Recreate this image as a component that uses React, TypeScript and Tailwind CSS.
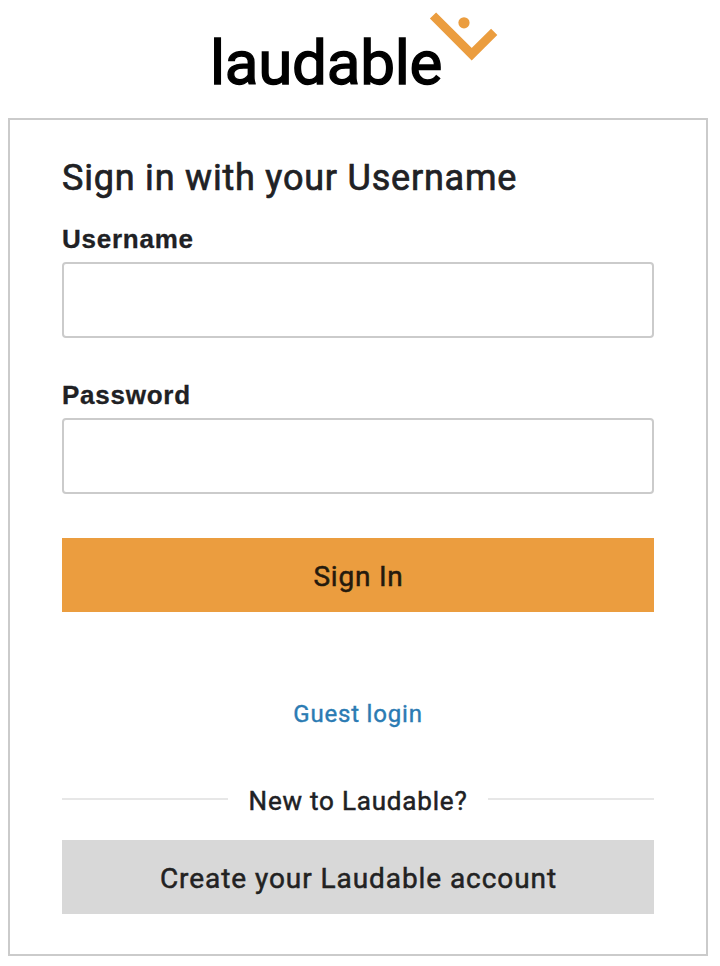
export default function App() {
  return (
    <main className="h-[966px] w-[720px] overflow-hidden bg-white font-['Roboto',sans-serif] text-[#202124]">
      <header className="flex h-[118px] items-start pl-[210px]">
        <span className="mt-[23px] w-[232px] whitespace-nowrap text-[62px] leading-[80px] tracking-[-0.3px] text-black [-webkit-text-stroke:1.4px_black]">laudable</span>
        <svg className="-ml-[13px] mt-[10px] h-[52px] w-[70px] shrink-0" viewBox="429 10 70 52">
          <path d="M433 15.5 471.7 54.2 494.2 31.8" fill="none" stroke="#eb9d3f" strokeWidth="8.8" />
          <circle cx="464" cy="22.8" r="5.6" fill="#eb9d3f" />
        </svg>
      </header>
      <form className="mx-2 h-[838px] w-[700px] border-2 border-[#cbcbcb] px-[52px] pt-[34px]">
        <h1 className="h-[48px] whitespace-nowrap text-[36px] leading-[48px] tracking-[0.79px] [-webkit-text-stroke:0.7px_#202124]">Sign in with your Username</h1>
        <label className="mt-[21px] block h-[39px] font-['Liberation_Sans',sans-serif] text-[26px] font-bold leading-[32px] tracking-[0.75px] [-webkit-text-stroke:0.3px_#202124]">Username</label>
        <input className="block h-[76px] w-full rounded-[4px] border-2 border-[#cbcbcb]" />
        <label className="mt-[41px] block h-[39px] font-['Liberation_Sans',sans-serif] text-[26px] font-bold leading-[32px] tracking-[0.75px] [-webkit-text-stroke:0.3px_#202124]">Password</label>
        <input className="block h-[76px] w-full rounded-[4px] border-2 border-[#cbcbcb]" type="password" />
        <button className="mt-[44px] block h-[74px] w-full bg-[#eb9d3f] pl-px pt-[3px] text-[28px] tracking-[0.8px] text-[#241a0d] [-webkit-text-stroke:0.5px_#241a0d]">Sign In</button>
        <a className="mt-[86px] block text-center text-[24px] leading-[32px] tracking-[0.8px] text-[#2b7bb3] [-webkit-text-stroke:0.4px_#2b7bb3]">Guest login</a>
        <div className="mt-[54px] flex h-[34px] items-center justify-between whitespace-nowrap text-[26px] tracking-[0.8px]">
          <i className="mb-[4px] h-[2px] w-[166px] bg-[#e7e7e7]" />
          <span className="[-webkit-text-stroke:0.5px_#202124]">New to Laudable?</span>
          <i className="mb-[4px] h-[2px] w-[166px] bg-[#e7e7e7]" />
        </div>
        <button className="mt-[22px] block h-[74px] w-full bg-[#d8d8d8] pl-px pt-[3px] text-[28px] tracking-[0.93px] text-[#222222] [-webkit-text-stroke:0.5px_#222222]">Create your Laudable account</button>
      </form>
    </main>
  );
}
